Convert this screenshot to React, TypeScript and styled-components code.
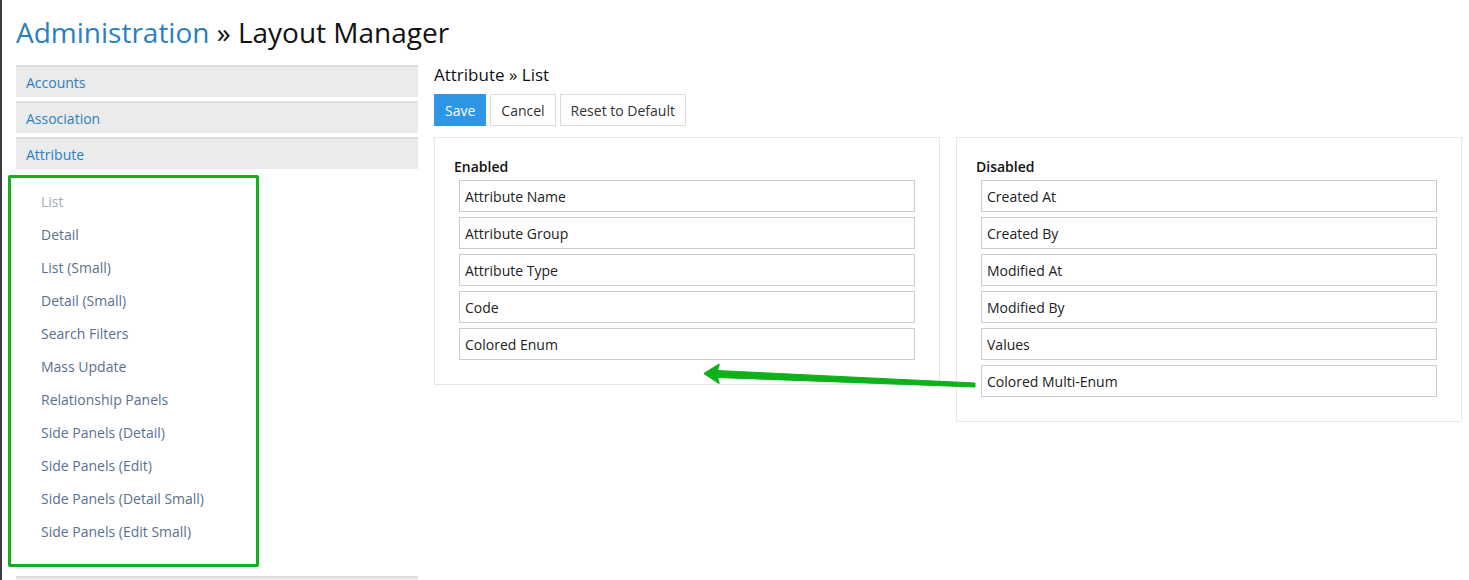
import React from "react";
import styled, { createGlobalStyle } from "styled-components";

const Global = createGlobalStyle`
  html, body { margin: 0; padding: 0; background: #fff; }
  body { font-family: "Open Sans", "Liberation Sans", sans-serif; font-size: 14px; color: #333; overflow: hidden; }
  * { box-sizing: border-box; }
`;

const Page = styled.div`
  position: relative;
  height: 100vh;
  overflow: hidden;
  border-left: 2px solid #3d3d3d;
  padding: 14px 7px 0 14px;
`;

const Title = styled.h1`
  margin: 0 0 15px;
  font-size: 28px;
  line-height: 36px;
  font-weight: 400;
  color: #111;
`;

const TitleLink = styled.span`
  color: #2a7fc1;
`;

const Columns = styled.div`
  display: grid;
  grid-template-columns: 402px 1fr;
  column-gap: 16px;
  align-items: start;
`;

const Sidebar = styled.div`
  display: flex;
  flex-direction: column;
`;

const GroupHeader = styled.div`
  height: 32px;
  margin-bottom: 4px;
  background: #ebebeb;
  border-top: 2px solid #dedede;
  padding-left: 10px;
  display: flex;
  align-items: center;
  color: #2a80c2;
  font-size: 14px;
`;

const SubList = styled.div`
  margin: 2px 0 9px -8px;
  width: 251px;
  border: 3px solid #12b01a;
  border-radius: 2px;
  padding: 7px 0 16px 30px;
  display: flex;
  flex-direction: column;
`;

const SubItem = styled.div<{ $active?: boolean }>`
  height: 33px;
  line-height: 33px;
  font-size: 14px;
  color: ${(p) => (p.$active ? "#a4aeb9" : "#58718e")};
`;

const Main = styled.div`
  display: flex;
  flex-direction: column;
`;

const SubTitle = styled.h2`
  margin: 0 0 9px;
  font-size: 17px;
  line-height: 20px;
  font-weight: 400;
  color: #111;
`;

const Toolbar = styled.div`
  display: flex;
  gap: 4px;
  margin-bottom: 11px;
`;

const Button = styled.button<{ $primary?: boolean }>`
  height: 32px;
  padding: 0 10px;
  font-family: inherit;
  font-size: 14px;
  border-radius: 0;
  border: 1px solid ${(p) => (p.$primary ? "#2d96e6" : "#dcdcdc")};
  background: ${(p) => (p.$primary ? "#2d96e6" : "#fff")};
  color: ${(p) => (p.$primary ? "#fff" : "#333")};
`;

const Panels = styled.div`
  display: grid;
  grid-template-columns: 1fr 1fr;
  column-gap: 16px;
  align-items: start;
`;

const Panel = styled.div`
  border: 1px solid #e8e8e8;
  padding: 19px 24px 24px;
`;

const PanelLabel = styled.div`
  font-weight: 600;
  font-size: 14px;
  line-height: 20px;
  color: #111;
  margin: 0 0 3px -5px;
`;

const FieldList = styled.div`
  display: flex;
  flex-direction: column;
  gap: 5px;
`;

const Field = styled.div`
  height: 32px;
  border: 1px solid #cccccc;
  padding: 0 5px;
  display: flex;
  align-items: center;
  font-size: 14px;
  color: #222;
  background: #fff;
`;

const ArrowOverlay = styled.svg`
  position: absolute;
  left: 0;
  top: 0;
  pointer-events: none;
`;

const subItems = [
  "List",
  "Detail",
  "List (Small)",
  "Detail (Small)",
  "Search Filters",
  "Mass Update",
  "Relationship Panels",
  "Side Panels (Detail)",
  "Side Panels (Edit)",
  "Side Panels (Detail Small)",
  "Side Panels (Edit Small)",
];

const enabled = ["Attribute Name", "Attribute Group", "Attribute Type", "Code", "Colored Enum"];
const disabled = ["Created At", "Created By", "Modified At", "Modified By", "Values", "Colored Multi-Enum"];

export default function App() {
  return (
    <>
      <Global />
      <Page>
        <Title>
          <TitleLink>Administration</TitleLink> » Layout Manager
        </Title>
        <Columns>
          <Sidebar>
            <GroupHeader>Accounts</GroupHeader>
            <GroupHeader>Association</GroupHeader>
            <GroupHeader>Attribute</GroupHeader>
            <SubList>
              {subItems.map((s, i) => (
                <SubItem key={s} $active={i === 0}>
                  {s}
                </SubItem>
              ))}
            </SubList>
            <GroupHeader />
          </Sidebar>
          <Main>
            <SubTitle>Attribute » List</SubTitle>
            <Toolbar>
              <Button $primary>Save</Button>
              <Button>Cancel</Button>
              <Button>Reset to Default</Button>
            </Toolbar>
            <Panels>
              <Panel>
                <PanelLabel>Enabled</PanelLabel>
                <FieldList>
                  {enabled.map((f) => (
                    <Field key={f}>{f}</Field>
                  ))}
                </FieldList>
              </Panel>
              <Panel>
                <PanelLabel>Disabled</PanelLabel>
                <FieldList>
                  {disabled.map((f) => (
                    <Field key={f}>{f}</Field>
                  ))}
                </FieldList>
              </Panel>
            </Panels>
          </Main>
        </Columns>
        <ArrowOverlay width="1469" height="580" viewBox="0 0 1469 580">
          <polygon points="715,370.5 973,383 973,387 715,377.5" fill="#0fb11a" stroke="#0fb11a" strokeWidth="1" strokeLinejoin="round" />
          <polygon points="702.5,373.5 717,364.5 714,374 717,383" fill="#0fb11a" stroke="#0fb11a" strokeWidth="1.5" strokeLinejoin="round" />
        </ArrowOverlay>
      </Page>
    </>
  );
}
